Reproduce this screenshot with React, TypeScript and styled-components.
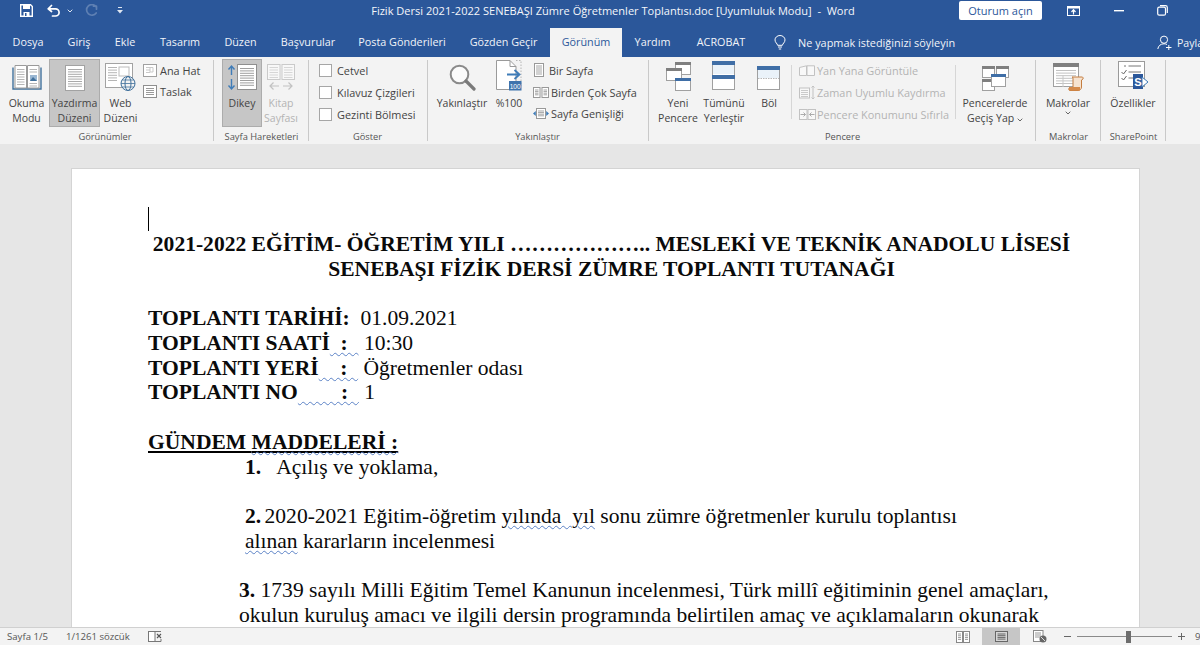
import React, { FC, ReactNode } from "react";
import styled, { createGlobalStyle } from "styled-components";

const BLUE = "#2b579a";
const UI_FONT = `"Open Sans", "Noto Sans", sans-serif`;

const GlobalStyle = createGlobalStyle`
  html, body { margin: 0; padding: 0; height: 100%; background: #e6e6e6; overflow: hidden; }
  #root { height: 100%; }
`;

const Shell = styled.div`
  width: 1200px;
  height: 645px;
  display: flex;
  flex-direction: column;
  overflow: hidden;
  font-family: ${UI_FONT};
  font-size: 10.5px;
  color: #444;
  svg { flex: none; }
`;

/* title bar */
const TitleBar = styled.div`
  height: 28px;
  flex: none;
  box-sizing: border-box;
  padding-bottom: 7px;
  display: flex;
  align-items: center;
  background: ${BLUE};
  color: #fff;
`;
const Qat = styled.div`
  width: 220px;
  flex: none;
  display: flex;
  align-items: center;
  padding-left: 20px;
  box-sizing: border-box;
  height: 100%;
`;
const QatSlot = styled.span<{ $w: number }>`
  width: ${(p) => p.$w}px;
  flex: none;
  display: flex;
`;
const Title = styled.div`
  width: 786px;
  flex: none;
  text-align: center;
  font-size: 11.05px;
  white-space: pre;
  color: #f4f6fa;
`;
const SignIn = styled.div`
  width: 83px;
  height: 19px;
  flex: none;
  margin-left: -47px;
  background: #fff;
  color: ${BLUE};
  border-radius: 2px;
  font-size: 11px;
  line-height: 19px;
  text-align: center;
`;
const WinButtons = styled.div`
  display: flex;
  align-items: center;
  gap: 33.5px;
  margin-left: 25px;
`;

/* tab row */
const TabBar = styled.div`
  height: 29px;
  flex: none;
  display: flex;
  align-items: stretch;
  background: ${BLUE};
`;
const Tab = styled.div<{ $active?: boolean; $w: number }>`
  width: ${(p) => p.$w}px;
  flex: none;
  text-align: center;
  line-height: 28px;
  font-size: 10.8px;
  white-space: nowrap;
  color: ${(p) => (p.$active ? BLUE : "#f1f4f9")};
  background: ${(p) => (p.$active ? "#f3f3f3" : "transparent")};
`;
const TellMe = styled.div`
  display: flex;
  align-items: center;
  gap: 12px;
  width: 398px;
  flex: none;
  padding: 0 0 1px 15px;
  box-sizing: border-box;
  font-size: 10.9px;
  color: #f1f4f9;
  white-space: nowrap;
`;
const Share = styled.div`
  display: flex;
  align-items: center;
  gap: 5px;
  font-size: 10.6px;
  color: #f1f4f9;
`;

/* ribbon */
const Ribbon = styled.div`
  height: 87px;
  flex: none;
  display: flex;
  background: #f3f3f3;
`;
const Group = styled.div<{ $w: number; $pad?: number }>`
  position: relative;
  width: ${(p) => p.$w}px;
  flex: none;
  box-sizing: border-box;
  padding: 2px 0 0 ${(p) => p.$pad ?? 0}px;
  display: flex;
  flex-direction: column;
  &::after {
    content: "";
    position: absolute;
    right: 0;
    top: 3px;
    bottom: 3px;
    width: 1px;
    background: #c9c9c9;
  }
`;
const GroupBody = styled.div`
  height: 70px;
  display: flex;
`;
const GroupLabel = styled.div<{ $shift?: number }>`
  height: 15px;
  line-height: 16px;
  margin-left: ${(p) => p.$shift ?? 0}px;
  text-align: center;
  font-size: 9.3px;
  color: #555;
  white-space: nowrap;
`;
const BigButton = styled.div<{ $w: number; $active?: boolean; $off?: boolean }>`
  width: ${(p) => p.$w}px;
  height: 68px;
  flex: none;
  box-sizing: border-box;
  display: flex;
  flex-direction: column;
  align-items: center;
  text-align: center;
  line-height: 15px;
  font-size: 10.5px;
  white-space: nowrap;
  color: ${(p) => (p.$off ? "#b4b4b4" : "#444")};
  background: ${(p) => (p.$active ? "#c6c6c6" : "transparent")};
  border: 1px solid ${(p) => (p.$active ? "#acacac" : "transparent")};
`;
const BigIcon = styled.div`
  height: 36px;
  flex: none;
  display: flex;
  align-items: flex-end;
  padding-bottom: 5px;
  box-sizing: border-box;
`;
const Column = styled.div<{ $w?: number; $top?: number; $left?: number }>`
  width: ${(p) => (p.$w ? `${p.$w}px` : "auto")};
  flex: none;
  box-sizing: border-box;
  display: flex;
  flex-direction: column;
  padding-top: ${(p) => p.$top ?? 0}px;
  padding-left: ${(p) => p.$left ?? 0}px;
`;
const SmallRow = styled.div<{ $off?: boolean; $gap?: number; $h?: number }>`
  height: ${(p) => p.$h ?? 22}px;
  display: flex;
  align-items: center;
  gap: ${(p) => p.$gap ?? 3}px;
  font-size: 10.9px;
  white-space: nowrap;
  color: ${(p) => (p.$off ? "#b4b4b4" : "#444")};
`;
const IconInset = styled.span`
  display: flex;
  margin: 0 3px 0 1px;
`;
const Check = styled.span`
  width: 11px;
  height: 11px;
  flex: none;
  background: #fff;
  border: 1px solid #a6a6a6;
`;
const VDivider = styled.div`
  width: 1px;
  height: 54px;
  margin: 6px 3px 0 0;
  background: #d6d6d6;
  flex: none;
`;

/* document */
const Workspace = styled.div`
  flex: 1;
  min-height: 0;
  overflow: hidden;
  background: #e6e6e6;
  padding: 24px 0 0 71px;
`;
const Page = styled.div`
  width: 1069px;
  height: 700px;
  box-sizing: border-box;
  padding: 38px 64px 0 76px;
  background: #fff;
  border: 1px solid #d4d4d4;
  font-family: "Liberation Serif", "Times New Roman", serif;
  font-size: 21.55px;
  color: #0a0a0a;
`;
const Line = styled.div<{ $indent?: number; $center?: boolean }>`
  height: 24.75px;
  line-height: 24.75px;
  white-space: pre;
  margin-left: ${(p) => p.$indent ?? 0}px;
  text-align: ${(p) => (p.$center ? "center" : "left")};
`;
const Caret = styled.span`
  display: inline-block;
  width: 1px;
  height: 24px;
  background: #000;
  vertical-align: top;
`;
const ItemNumber = styled.b`
  margin-right: -2px;
`;
const Squiggle = styled.span`
  text-decoration: underline wavy #5b82c6;
  text-decoration-thickness: 1px;
  text-underline-offset: 2px;
`;
const Underlined = styled.b`
  text-decoration: underline solid #000;
  text-decoration-thickness: 2px;
  text-underline-offset: 2px;
`;

/* status bar */
const StatusBar = styled.div`
  height: 18px;
  flex: none;
  display: flex;
  align-items: center;
  background: #f3f3f3;
  border-top: 1px solid #d0d0d0;
  box-sizing: border-box;
  font-size: 9.6px;
  color: #555;
  white-space: nowrap;
`;
const StatusText = styled.span<{ $w: number; $pad?: number }>`
  width: ${(p) => p.$w}px;
  padding-left: ${(p) => p.$pad ?? 0}px;
  box-sizing: border-box;
  flex: none;
`;
const ViewButton = styled.div<{ $active?: boolean; $w: number }>`
  width: ${(p) => p.$w}px;
  height: 100%;
  flex: none;
  display: flex;
  align-items: center;
  justify-content: center;
  background: ${(p) => (p.$active ? "#c6c6c6" : "transparent")};
`;
const ZoomTrack = styled.div`
  width: 95px;
  height: 1px;
  flex: none;
  margin: 0 6px;
  background: #8a8a8a;
  display: flex;
  align-items: center;
`;
const ZoomThumb = styled.span`
  width: 5px;
  height: 12px;
  flex: none;
  margin-left: 49px;
  background: #6d6d6d;
`;

/* icon bits */
const WBLUE = "#41719c";

const Lines: FC<{ x: number; y: number; w: number; n: number; step?: number; c?: string }> = ({ x, y, w, n, step = 2.5, c = "#b5b5b5" }) => (
  <>
    {Array.from({ length: n }).map((_, i) => (
      <line key={i} x1={x} x2={x + w} y1={y + i * step + 0.5} y2={y + i * step + 0.5} stroke={c} strokeWidth="1" />
    ))}
  </>
);

const Win: FC<{ x: number; y: number; w: number; h: number; bar?: string; barH?: number }> = ({ x, y, w, h, bar = "#7f7f7f", barH = 3 }) => (
  <>
    <rect x={x + 0.5} y={y + 0.5} width={w} height={h} fill="#fff" stroke="#a0a0a0" />
    <rect x={x} y={y} width={w + 1} height={barH} fill={bar} />
  </>
);

const Svg: FC<{ w: number; h: number; children: ReactNode; off?: boolean }> = ({ w, h, children, off }) => (
  <svg width={w} height={h} viewBox={`0 0 ${w} ${h}`} fill="none" opacity={off ? 0.45 : 1}>
    {children}
  </svg>
);

const SaveIcon = () => (
  <Svg w={13} h={13}>
    <path d="M0.7 0.7H10.5L12.3 2.5V12.3H0.7Z" stroke="#fff" strokeWidth="1.4" />
    <rect x="3" y="1" width="7" height="4" fill="#fff" />
    <rect x="3.5" y="8" width="6" height="4.5" fill="#fff" />
    <rect x="5" y="9" width="1.5" height="3" fill={BLUE} />
  </Svg>
);
const UndoIcon: FC<{ dim?: boolean }> = ({ dim }) => (
  <Svg w={14} h={14}>
    <g stroke={dim ? "#5f80b3" : "#fff"} strokeWidth="1.7" strokeLinecap="round" strokeLinejoin="round">
      {dim ? (
        <path d="M9.5 2.2H12.5V5.2M12 2.6A5.3 5.3 0 1 0 12.2 9" />
      ) : (
        <path d="M4.5 1.5L1.2 4.8L4.5 7.5M1.5 4.8H8.5A3.6 3.6 0 0 1 8.5 12H5.5" />
      )}
    </g>
  </Svg>
);
const TinyDown: FC<{ c?: string }> = ({ c = "#dfe6f1" }) => (
  <Svg w={6} h={4}>
    <path d="M0.7 0.7L3 3L5.3 0.7" stroke={c} strokeWidth="1" />
  </Svg>
);
const QatMore = () => (
  <Svg w={6} h={7}>
    <rect x="1" y="0" width="4" height="1" fill="#dfe6f1" />
    <path d="M0 3H6L3 6.5Z" fill="#dfe6f1" />
  </Svg>
);
const DisplayIcon = () => (
  <Svg w={13} h={10}>
    <rect x="0.5" y="0.5" width="12" height="9" stroke="#fff" />
    <rect x="0.5" y="0.5" width="12" height="2" fill="#fff" />
    <path d="M6.5 8.5V4M4.5 6L6.5 3.7L8.5 6" stroke="#fff" strokeWidth="1.2" />
  </Svg>
);
const MinIcon = () => (
  <Svg w={10} h={2}>
    <rect width="10" height="1.4" fill="#fff" />
  </Svg>
);
const RestoreIcon = () => (
  <Svg w={11} h={11}>
    <rect x="0.7" y="2.2" width="7.8" height="8" rx="1.5" stroke="#fff" strokeWidth="1.2" />
    <path d="M3 0.7H8.5A1.8 1.8 0 0 1 10.3 2.5V8" stroke="#fff" strokeWidth="1.2" />
  </Svg>
);
const BulbIcon = () => (
  <Svg w={12} h={15}>
    <path d="M3.6 10.3C3.4 8.5 1 7.6 1 4.9A5 4.4 0 0 1 11 4.9C11 7.6 8.6 8.5 8.4 10.3Z" stroke="#fff" strokeWidth="1" />
    <path d="M4 12H8M4.8 14H7.2" stroke="#fff" strokeWidth="1" />
  </Svg>
);
const PersonIcon = () => (
  <Svg w={15} h={15}>
    <circle cx="7" cy="4.7" r="3.6" stroke="#fff" strokeWidth="1" />
    <path d="M0.8 14C1.3 10.8 3.6 8.8 7 8.8C8.2 8.8 9.2 9 10 9.5" stroke="#fff" strokeWidth="1" />
    <path d="M9 12.5H14.5M11.8 10V15" stroke="#fff" strokeWidth="1" />
  </Svg>
);

const ReadIcon = () => (
  <Svg w={30} h={27}>
    <path d="M1 3.5V25H29V3.5" stroke={WBLUE} strokeWidth="1.4" />
    <path d="M3 1.5H14.5V24H3ZM15.5 1.5H27V24H15.5Z" fill="#fff" stroke="#9a9a9a" />
    <Lines x={5} y={5} w={7.5} n={7} />
    <Lines x={17.5} y={5} w={7.5} n={2} />
    <rect x="18" y="11" width="7" height="6" fill="#9ab7d3" />
    <path d="M18 17L21 13L25 17Z" fill={WBLUE} />
    <Lines x={17.5} y={19} w={7.5} n={2} />
  </Svg>
);
const PrintIcon = () => (
  <Svg w={20} h={26}>
    <rect x="0.5" y="0.5" width="19" height="25" fill="#fff" stroke="#a2a2a2" />
    <Lines x={3} y={4} w={14} n={8} step={2.4} c="#a9a9a9" />
  </Svg>
);
const WebIcon = () => (
  <Svg w={31} h={28}>
    <rect x="0.5" y="0.5" width="27" height="24" fill="#fff" stroke="#a2a2a2" />
    <Lines x={3} y={4} w={9} n={6} step={2.6} />
    <rect x="14" y="4" width="10" height="9" fill="#fff" stroke="#bbb" />
    <circle cx="23" cy="20.5" r="7" fill="#f3f3f3" stroke={WBLUE} />
    <ellipse cx="23" cy="20.5" rx="3" ry="7" stroke={WBLUE} />
    <path d="M16 20.5H30M17 17H29M17 24H29" stroke={WBLUE} strokeWidth="0.8" />
  </Svg>
);
const OutlineIcon = () => (
  <Svg w={14} h={13}>
    <rect x="0.5" y="0.5" width="13" height="12" fill="#fff" stroke="#a0a0a0" />
    <Lines x={3} y={3} w={4} n={3} step={2.5} c="#c9c9c9" />
    <path d="M7 3.5H10V8H7Z" stroke="#c9c9c9" />
  </Svg>
);
const DraftIcon = () => (
  <Svg w={14} h={13}>
    <rect x="0.5" y="0.5" width="13" height="12" fill="#fff" stroke="#8f8f8f" />
    <Lines x={3} y={3} w={8} n={4} step={2} c="#9a9a9a" />
  </Svg>
);
const VerticalIcon = () => (
  <Svg w={30} h={27}>
    <path d="M4.5 2V11M1.5 5.5L4.5 2L7.5 5.5M4.5 15V25M1.5 21.5L4.5 25L7.5 21.5" stroke="#3f7cb8" strokeWidth="1.4" />
    <rect x="10.5" y="0.5" width="19" height="25" fill="#fff" stroke="#8f8f8f" />
    <Lines x={13} y={4} w={14} n={8} step={2.4} c="#9f9f9f" />
  </Svg>
);
const BookPagesIcon = () => (
  <Svg w={28} h={27} off>
    <rect x="0.5" y="0.5" width="12.5" height="15" fill="#fff" stroke="#9a9a9a" />
    <rect x="15" y="0.5" width="12.5" height="15" fill="#fff" stroke="#9a9a9a" />
    <Lines x={2.5} y={3} w={8.5} n={5} />
    <Lines x={17} y={3} w={8.5} n={5} />
    <path d="M3 22H12M6.5 18.5L3 22L6.5 25.5M16 22H25M21.5 18.5L25 22L21.5 25.5" stroke="#888" strokeWidth="1.2" />
  </Svg>
);
const MagnifierIcon = () => (
  <Svg w={27} h={27}>
    <circle cx="10.5" cy="10.5" r="8.8" stroke="#8a8a8a" strokeWidth="2" fill="#fbfbfb" />
    <path d="M17 17L25 25" stroke="#7a7a7a" strokeWidth="3.2" strokeLinecap="round" />
  </Svg>
);
const HundredIcon = () => (
  <Svg w={26} h={31}>
    <path d="M0.5 0.5H14L20 6.5V29.5H0.5Z" fill="#fff" stroke="#9a9a9a" />
    <path d="M14 0.5V6.5H20" stroke="#9a9a9a" />
    <path d="M20 0.5H25V26" stroke="#b5b5b5" strokeDasharray="1.5 1.5" />
    <path d="M11 14.5H23M18.5 10L23.5 14.5L18.5 19" stroke="#3f7cb8" strokeWidth="1.8" />
    <rect x="13" y="21" width="12.5" height="9.5" fill="#3f74ad" />
    <text x="19.2" y="28.6" textAnchor="middle" fontSize="6.6" fill="#fff" fontFamily="Liberation Sans, sans-serif">100</text>
  </Svg>
);
const OnePageIcon = () => (
  <Svg w={10} h={14}>
    <rect x="0.5" y="0.5" width="9" height="13" fill="#fff" stroke="#999" />
    <Lines x={2} y={2.5} w={6} n={5} step={2} c="#a5a5a5" />
  </Svg>
);
const TwoPagesIcon = () => (
  <Svg w={16} h={11}>
    <rect x="0.5" y="0.5" width="6.5" height="10" fill="#fff" stroke="#999" />
    <rect x="9" y="0.5" width="6.5" height="10" fill="#fff" stroke="#999" />
    <Lines x={2} y={2.5} w={3.5} n={4} step={1.6} c="#a5a5a5" />
    <Lines x={10.5} y={2.5} w={3.5} n={4} step={1.6} c="#a5a5a5" />
  </Svg>
);
const PageWidthIcon = () => (
  <Svg w={16} h={11}>
    <rect x="3.5" y="0.5" width="9" height="10" fill="#fff" stroke="#999" />
    <Lines x={5} y={2.5} w={6} n={4} step={1.6} c="#a5a5a5" />
    <path d="M2.8 3L0 5.5L2.8 8ZM13.2 3L16 5.5L13.2 8Z" fill="#3f7cb8" />
  </Svg>
);
const NewWindowIcon = () => (
  <Svg w={27} h={30}>
    <Win x={10} y={1} w={15} h={12} />
    <Win x={1} y={7} w={15} h={12} />
    <Win x={10} y={17} w={15} h={12} bar="#3f6ea6" />
  </Svg>
);
const ArrangeIcon = () => (
  <Svg w={24} h={30}>
    <rect x="0.5" y="0.5" width="22" height="28" fill="#fff" stroke="#a0a0a0" />
    <rect x="0" y="0" width="23" height="4" fill="#3f6ea6" />
    <rect x="1" y="4" width="21" height="9" fill="#eaf2f9" />
    <rect x="0" y="14" width="23" height="4" fill="#3f6ea6" />
  </Svg>
);
const SplitIcon = () => (
  <Svg w={24} h={25}>
    <rect x="0.5" y="0.5" width="22" height="23" fill="#fff" stroke="#a0a0a0" />
    <rect x="0" y="0" width="23" height="4" fill="#3f6ea6" />
    <rect x="1" y="4" width="21" height="8" fill="#eaf2f9" />
    <path d="M1 12.5H22" stroke="#b8b8b8" strokeDasharray="1.5 1" />
  </Svg>
);
const SideBySideIcon = () => (
  <Svg w={16} h={11} off>
    <path d="M0.5 2.5L7.5 0.8V10.5H0.5ZM8 0.8H15.5V10.5H8Z" fill="#fff" stroke="#888" />
  </Svg>
);
const SyncIcon = () => (
  <Svg w={16} h={15} off>
    <rect x="0.5" y="3" width="10" height="10" fill="#fff" stroke="#888" />
    <Lines x={2} y={5} w={7} n={4} step={2} c="#999" />
    <path d="M14 1V14M12.5 2.5L14 1L15.5 2.5M12.5 12.5L14 14L15.5 12.5" stroke="#888" />
  </Svg>
);
const ResetIcon = () => (
  <Svg w={17} h={11} off>
    <rect x="0.5" y="0.5" width="7.5" height="10" fill="#fff" stroke="#888" />
    <rect x="9" y="0.5" width="7.5" height="10" fill="#fff" stroke="#888" />
    <path d="M1.5 5.5H6.5M4.5 3.5L6.5 5.5L4.5 7.5M15.5 5.5H10.5M12.5 3.5L10.5 5.5L12.5 7.5" stroke="#555" />
  </Svg>
);
const SwitchIcon = () => (
  <Svg w={29} h={26}>
    <Win x={1} y={1} w={12} h={11} />
    <Win x={15} y={1} w={12} h={11} />
    <Win x={1} y={14} w={12} h={11} />
    <Win x={10} y={9} w={14} h={12} bar="#3f6ea6" />
  </Svg>
);
const MacroIcon = () => (
  <Svg w={31} h={28}>
    <rect x="0.5" y="0.5" width="25" height="23" fill="#fff" stroke="#a0a0a0" />
    <rect x="0" y="0" width="26" height="4" fill="#808080" />
    <Lines x={3} y={7} w={20} n={6} step={2.6} c="#c2c2c2" />
    <path d="M10 12V24" stroke="#c8c8c8" />
    <path d="M19 14H29C30 14 30.5 15 30 16L28.5 17V24C28.5 26 27 27.5 25 27.5H17C15.5 27.5 15 25 17 24.5H20V15.5C20 14.8 19.5 14 19 14Z" fill="#f6e3d0" stroke="#c47c3e" />
    <rect x="16" y="24" width="11" height="3.5" fill="#d58a4a" />
  </Svg>
);
const PropsIcon = () => (
  <Svg w={31} h={30}>
    <rect x="0.5" y="0.5" width="26" height="25" fill="#fff" stroke="#9a9a9a" />
    <path d="M6 5H8M10.5 5H23M10.5 11H23M10.5 17H20" stroke="#777" />
    <path d="M3.5 11L5.5 13L8.5 9M3.5 17L5.5 19L8.5 15" stroke="#666" />
    <rect x="15" y="13" width="10" height="15" fill={BLUE} />
    <path d="M24 16L30 21L24 26Z" fill="#fff" stroke="#3f7cb8" />
    <text x="20" y="25" textAnchor="middle" fontSize="11" fontWeight="700" fill="#fff" fontFamily="Liberation Sans, sans-serif">S</text>
  </Svg>
);
const SmallBook = () => (
  <Svg w={14} h={12}>
    <rect x="0.5" y="0.5" width="6.5" height="10" stroke="#777" fill="#fff" />
    <path d="M7 0.5H13M13 8V10.5H7" stroke="#777" />
    <path d="M9 3L13 7M13 3L9 7" stroke="#555" strokeWidth="1.1" />
  </Svg>
);
const StatusRead = () => (
  <Svg w={14} h={12}>
    <rect x="0.5" y="0.5" width="6" height="11" fill="#fff" stroke="#888" />
    <rect x="7.5" y="0.5" width="6" height="11" fill="#fff" stroke="#888" />
    <Lines x={2} y={2.5} w={3} n={4} step={1.8} c="#999" />
    <Lines x={9} y={2.5} w={3} n={4} step={1.8} c="#999" />
  </Svg>
);
const StatusPrint = () => (
  <Svg w={13} h={11}>
    <rect x="0.5" y="0.5" width="12" height="10" fill="#d6d6d6" stroke="#666" />
    <Lines x={2.5} y={2.5} w={8} n={4} step={1.7} c="#666" />
  </Svg>
);
const StatusWeb = () => (
  <Svg w={14} h={13}>
    <rect x="0.5" y="0.5" width="9.5" height="11" fill="#fff" stroke="#888" />
    <Lines x={2} y={2.5} w={6} n={3} step={2} c="#999" />
    <circle cx="10" cy="9" r="3.5" fill="#666" />
    <path d="M8 7L12 11" stroke="#ddd" />
  </Svg>
);
const MinusPlus: FC<{ plus?: boolean }> = ({ plus }) => (
  <Svg w={7} h={7}>
    <path d={plus ? "M0 3.5H7M3.5 0V7" : "M0 3.5H7"} stroke="#666" />
  </Svg>
);

const App: FC = () => (
  <Shell>
    <GlobalStyle />
    <TitleBar>
      <Qat>
        <QatSlot $w={27}><SaveIcon /></QatSlot>
        <QatSlot $w={20}><UndoIcon /></QatSlot>
        <QatSlot $w={17}><TinyDown /></QatSlot>
        <QatSlot $w={33}><UndoIcon dim /></QatSlot>
        <QatSlot $w={10}><QatMore /></QatSlot>
      </Qat>
      <Title>Fizik Dersi 2021-2022 SENEBAŞI Zümre Öğretmenler Toplantısı.doc [Uyumluluk Modu]  -  Word</Title>
      <SignIn>Oturum açın</SignIn>
      <WinButtons>
        <DisplayIcon />
        <MinIcon />
        <RestoreIcon />
      </WinButtons>
    </TitleBar>

    <TabBar>
      <Tab $w={56}>Dosya</Tab>
      <Tab $w={46}>Giriş</Tab>
      <Tab $w={46}>Ekle</Tab>
      <Tab $w={64}>Tasarım</Tab>
      <Tab $w={57}>Düzen</Tab>
      <Tab $w={78}>Başvurular</Tab>
      <Tab $w={110}>Posta Gönderileri</Tab>
      <Tab $w={93}>Gözden Geçir</Tab>
      <Tab $w={72} $active>Görünüm</Tab>
      <Tab $w={61}>Yardım</Tab>
      <Tab $w={76}>ACROBAT</Tab>
      <TellMe><BulbIcon />Ne yapmak istediğinizi söyleyin</TellMe>
      <Share><PersonIcon />Payla</Share>
    </TabBar>

    <Ribbon>
      <Group $w={214} $pad={4}>
        <GroupBody>
          <BigButton $w={45}><BigIcon><ReadIcon /></BigIcon>Okuma<br />Modu</BigButton>
          <BigButton $w={51} $active><BigIcon><PrintIcon /></BigIcon>Yazdırma<br />Düzeni</BigButton>
          <BigButton $w={41}><BigIcon><WebIcon /></BigIcon>Web<br />Düzeni</BigButton>
          <Column $top={1} $left={2}>
            <SmallRow $h={21}><OutlineIcon />Ana Hat</SmallRow>
            <SmallRow $h={21}><DraftIcon />Taslak</SmallRow>
          </Column>
        </GroupBody>
        <GroupLabel $shift={-8}>Görünümler</GroupLabel>
      </Group>

      <Group $w={95} $pad={8}>
        <GroupBody>
          <BigButton $w={40} $active><BigIcon><VerticalIcon /></BigIcon>Dikey</BigButton>
          <BigButton $w={38} $off><BigIcon><BookPagesIcon /></BigIcon>Kitap<br />Sayfası</BigButton>
        </GroupBody>
        <GroupLabel $shift={-8}>Sayfa Hareketleri</GroupLabel>
      </Group>

      <Group $w={119} $pad={10}>
        <GroupBody>
          <Column>
            <SmallRow $gap={5}><Check />Cetvel</SmallRow>
            <SmallRow $gap={5}><Check />Kılavuz Çizgileri</SmallRow>
            <SmallRow $gap={5}><Check />Gezinti Bölmesi</SmallRow>
          </Column>
        </GroupBody>
        <GroupLabel $shift={-12}>Göster</GroupLabel>
      </Group>

      <Group $w={221} $pad={5}>
        <GroupBody>
          <BigButton $w={58}><BigIcon><MagnifierIcon /></BigIcon>Yakınlaştır</BigButton>
          <BigButton $w={36}><BigIcon><HundredIcon /></BigIcon>%100</BigButton>
          <Column $left={6}>
            <SmallRow $gap={2}><IconInset><OnePageIcon /></IconInset>Bir Sayfa</SmallRow>
            <SmallRow $gap={2}><TwoPagesIcon />Birden Çok Sayfa</SmallRow>
            <SmallRow $gap={2} $h={21}><PageWidthIcon />Sayfa Genişliği</SmallRow>
          </Column>
        </GroupBody>
        <GroupLabel $shift={-7}>Yakınlaştır</GroupLabel>
      </Group>

      <Group $w={387} $pad={6}>
        <GroupBody>
          <BigButton $w={46}><BigIcon><NewWindowIcon /></BigIcon>Yeni<br />Pencere</BigButton>
          <BigButton $w={46}><BigIcon><ArrangeIcon /></BigIcon>Tümünü<br />Yerleştir</BigButton>
          <BigButton $w={44}><BigIcon><SplitIcon /></BigIcon>Böl</BigButton>
          <VDivider />
          <Column $w={160} $left={4}>
            <SmallRow $off $gap={2}><SideBySideIcon />Yan Yana Görüntüle</SmallRow>
            <SmallRow $off $gap={2}><SyncIcon />Zaman Uyumlu Kaydırma</SmallRow>
            <SmallRow $off $gap={1}><ResetIcon />Pencere Konumunu Sıfırla</SmallRow>
          </Column>
          <VDivider />
          <BigButton $w={72}><BigIcon><SwitchIcon /></BigIcon>Pencerelerde<br /><span>Geçiş Yap <TinyDown c="#666" /></span></BigButton>
        </GroupBody>
        <GroupLabel $shift={-6}>Pencere</GroupLabel>
      </Group>

      <Group $w={65} $pad={4}>
        <GroupBody>
          <BigButton $w={56}><BigIcon><MacroIcon /></BigIcon>Makrolar<br /><TinyDown c="#666" /></BigButton>
        </GroupBody>
        <GroupLabel $shift={-4}>Makrolar</GroupLabel>
      </Group>

      <Group $w={65} $pad={3}>
        <GroupBody>
          <BigButton $w={58}><BigIcon><PropsIcon /></BigIcon>Özellikler</BigButton>
        </GroupBody>
        <GroupLabel $shift={-3}>SharePoint</GroupLabel>
      </Group>
    </Ribbon>

    <Workspace>
      <Page>
        <Line><Caret /></Line>
        <Line $center><b>2021-2022 EĞİTİM- ÖĞRETİM YILI ……………….. MESLEKİ VE TEKNİK ANADOLU LİSESİ</b></Line>
        <Line $center><b>SENEBAŞI FİZİK DERSİ ZÜMRE TOPLANTI TUTANAĞI</b></Line>
        <Line />
        <Line><b>TOPLANTI TARİHİ:</b>  01.09.2021</Line>
        <Line><b>TOPLANTI SAATİ<Squiggle>  :  </Squiggle></b> 10:30</Line>
        <Line><b>TOPLANTI YERİ<Squiggle>    :  </Squiggle></b> Öğretmenler odası</Line>
        <Line><b>TOPLANTI NO<Squiggle>        :  </Squiggle></b> 1</Line>
        <Line />
        <Line><Underlined>GÜNDEM <Squiggle>MADDELERİ :</Squiggle></Underlined></Line>
        <Line $indent={97}><b>1.</b>   Açılış ve yoklama,</Line>
        <Line />
        <Line $indent={97}><ItemNumber>2.</ItemNumber> 2020-2021 Eğitim-öğretim <Squiggle>yılında  yıl</Squiggle> sonu zümre öğretmenler kurulu toplantısı</Line>
        <Line $indent={97}><Squiggle>alınan</Squiggle> kararların incelenmesi</Line>
        <Line />
        <Line $indent={91}><b>3.</b> 1739 sayılı Milli Eğitim Temel Kanunun incelenmesi, Türk millî eğitiminin genel amaçları,</Line>
        <Line $indent={91}>okulun kuruluş amacı ve ilgili dersin programında belirtilen amaç ve açıklamaların okunarak</Line>
      </Page>
    </Workspace>

    <StatusBar>
      <StatusText $w={66} $pad={7}>Sayfa 1/5</StatusText>
      <StatusText $w={82}>1/1261 sözcük</StatusText>
      <SmallBook />
      <StatusText $w={794} />
      <StatusRead />
      <StatusText $w={12} />
      <ViewButton $w={38} $active><StatusPrint /></ViewButton>
      <StatusText $w={13} />
      <StatusWeb />
      <StatusText $w={17} />
      <MinusPlus />
      <ZoomTrack><ZoomThumb /></ZoomTrack>
      <MinusPlus plus />
      <StatusText $w={15} $pad={10}>9</StatusText>
    </StatusBar>
  </Shell>
);

export default App;
